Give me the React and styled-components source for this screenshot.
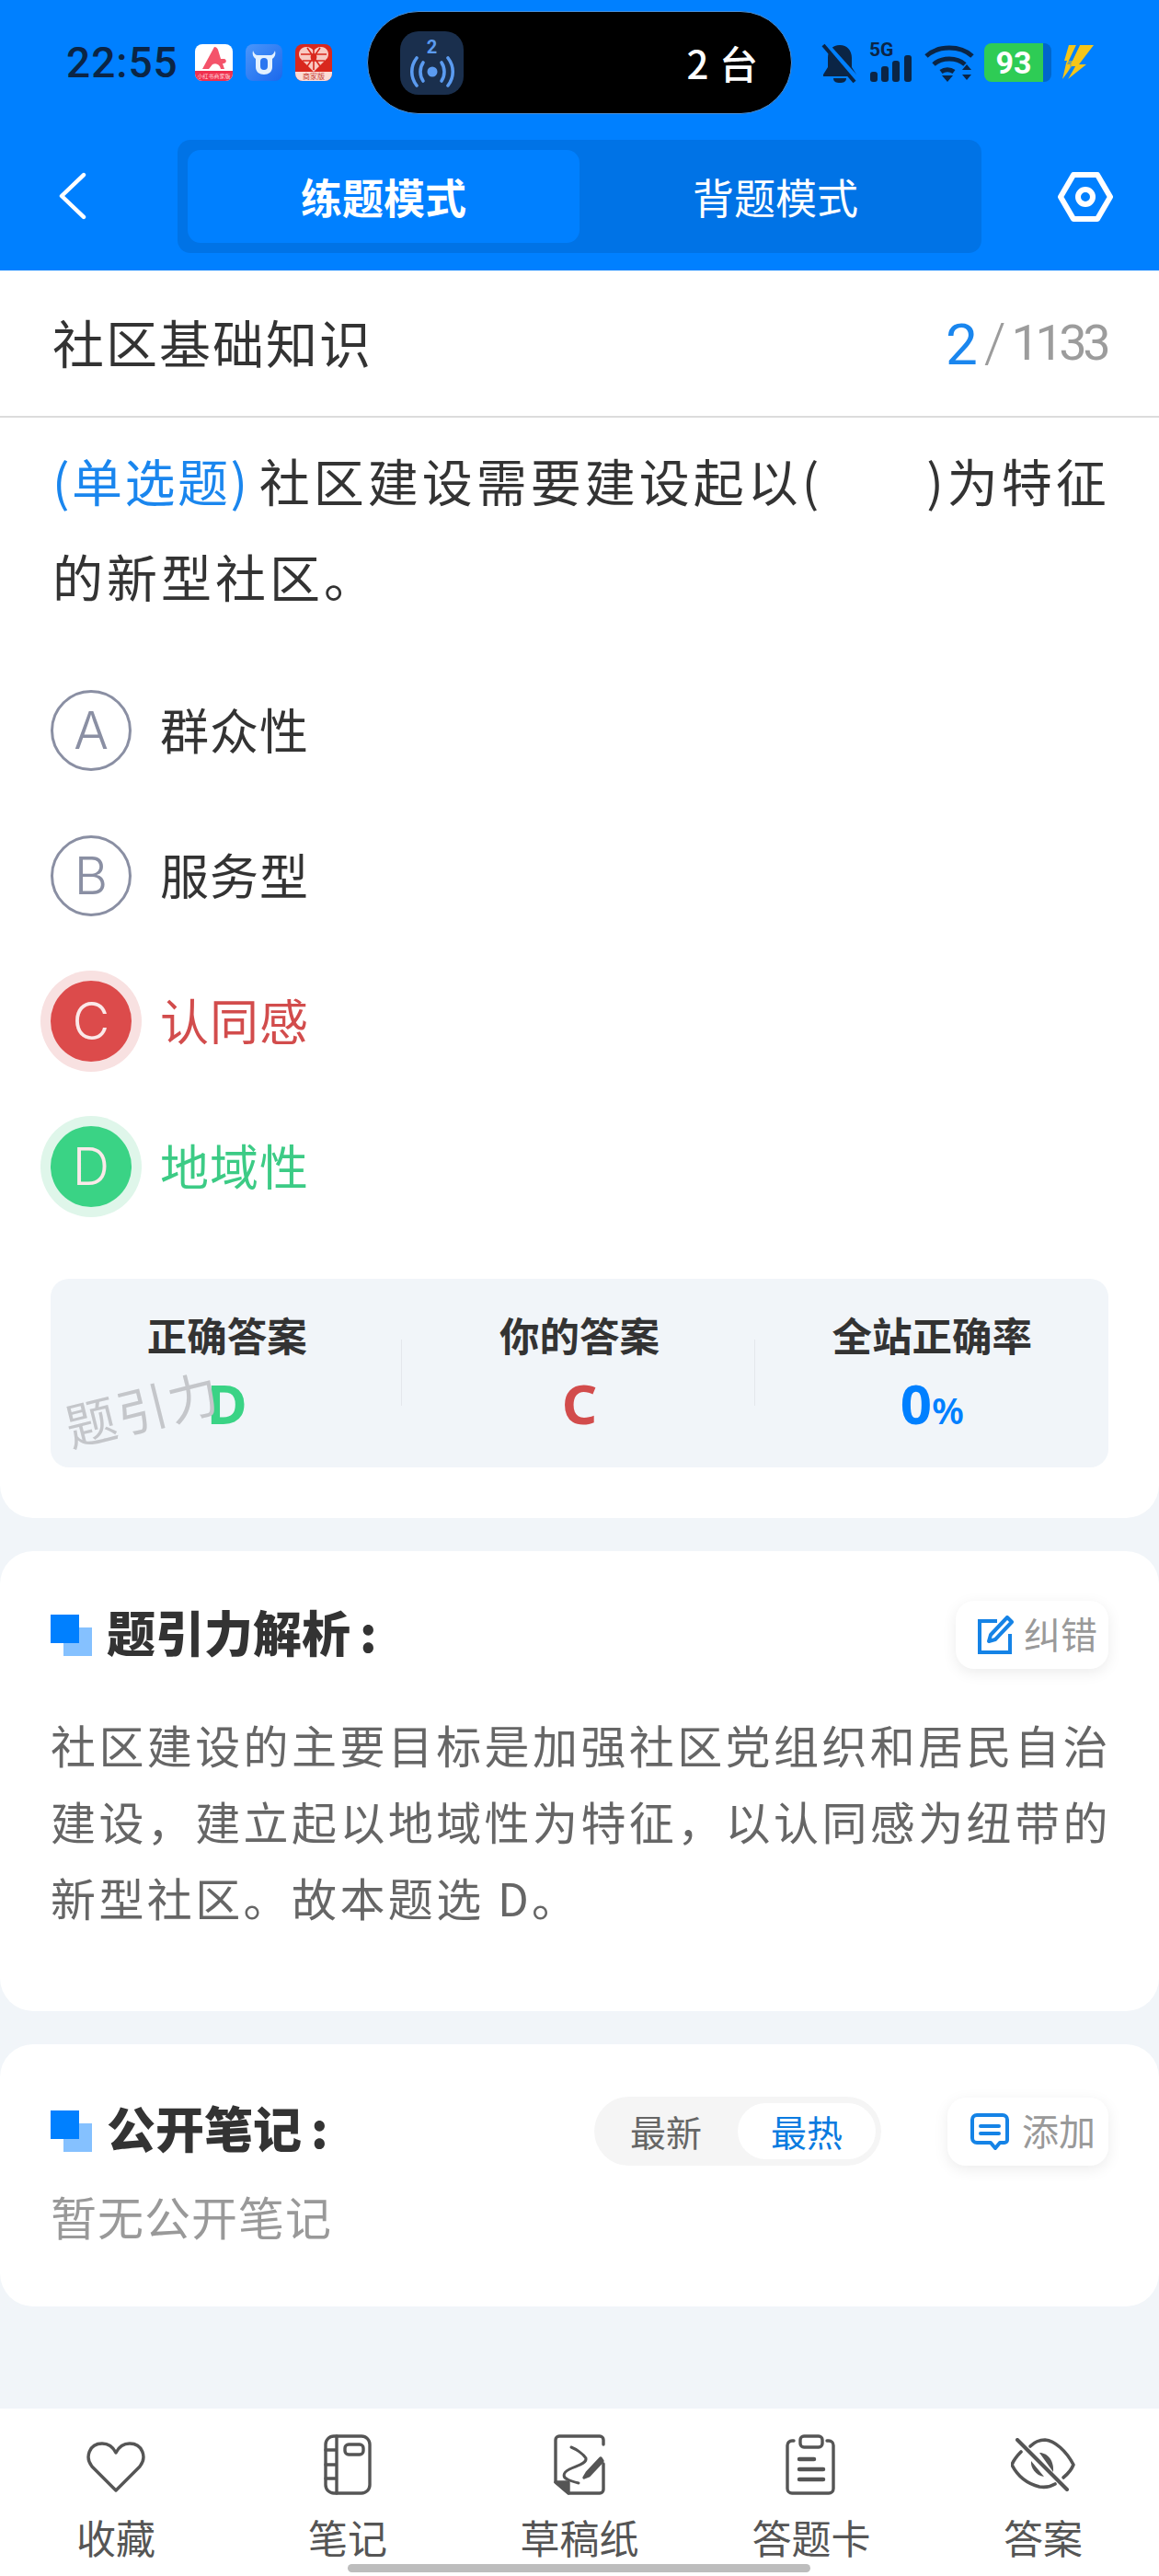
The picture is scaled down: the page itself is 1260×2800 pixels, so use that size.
import React from "react";
import styled, { createGlobalStyle } from "styled-components";

const GlobalStyle = createGlobalStyle`
    html, body {
        margin: 0;
        padding: 0;
        background: #f1f5f9;
    }
    * {
        box-sizing: border-box;
    }
    body {
        font-family: "Noto Sans CJK SC", "Noto Sans", sans-serif;
    }
`;

const Page = styled.div`
    width: 1260px;
    height: 2800px;
    display: flex;
    flex-direction: column;
    overflow: hidden;
    background: #f1f5f9;
    position: relative;
`;

const Header = styled.header`
    height: 294px;
    flex: none;
    background: #0080ff;
    display: flex;
    flex-direction: column;
`;

const StatusBar = styled.div`
    height: 152px;
    flex: none;
    display: flex;
    align-items: flex-start;
    padding: 12px 0 0 72px;
`;

const Clock = styled.div`
    width: 128px;
    margin-top: 33px;
    font-family: Roboto, sans-serif;
    font-size: 46px;
    line-height: 46px;
    font-weight: 500;
    letter-spacing: 1px;
    color: #0b2545;
`;

const AppIcons = styled.div`
    display: flex;
    gap: 14px;
    margin: 36px 0 0 12px;
`;

const Island = styled.div`
    width: 462px;
    height: 112px;
    margin-left: 38px;
    border-radius: 56px;
    background: #000;
    border: 1px solid #4a8fd6;
    display: flex;
    align-items: center;
    justify-content: space-between;
    padding: 0 35px 0 35px;
`;

const IslandIcon = styled.div`
    width: 69px;
    height: 69px;
    border-radius: 20px;
    background: #1a2f4d;
    display: flex;
    flex-direction: column;
    align-items: center;
    justify-content: center;
    color: #5b9bf0;
    font-family: Roboto, sans-serif;
    font-size: 20px;
    line-height: 20px;
    font-weight: 700;
`;

const IslandText = styled.div`
    color: #fff;
    font-size: 42px;
    line-height: 44px;
    font-weight: 500;
    letter-spacing: 1px;
`;

const StatusIcons = styled.div`
    display: flex;
    align-items: flex-start;
    margin: 35px 0 0 32px;
`;

const FiveG = styled.div`
    position: relative;
    width: 48px;
    height: 42px;
    margin-left: 12px;
`;

const FiveGLabel = styled.span`
    position: absolute;
    left: 0;
    top: -4px;
    font-family: Roboto, sans-serif;
    font-size: 21px;
    line-height: 22px;
    font-weight: 700;
    color: #0b2545;
`;

const WifiSvg = styled.svg`
    margin-left: 12px;
`;

const BoltSvg = styled.svg`
    margin: 1px 0 0 11px;
`;

const Battery = styled.div`
    width: 64px;
    height: 42px;
    margin-left: 11px;
    border-radius: 8px 0 0 8px;
    background: #2ecc55;
    color: #fff;
    font-family: Roboto, sans-serif;
    font-size: 34px;
    line-height: 42px;
    font-weight: 700;
    text-align: center;
`;

const BatteryTail = styled.div`
    width: 9px;
    height: 42px;
    border-radius: 0 8px 8px 0;
    background: #0066cc;
`;

const NavBar = styled.div`
    flex: none;
    height: 123px;
    display: flex;
    align-items: center;
    padding: 0 50px 0 64px;
`;

const BackSvg = styled.svg`
    margin-bottom: 2px;
`;

const Toggle = styled.div`
    width: 875px;
    height: 123px;
    margin-left: 99px;
    padding: 11px;
    border-radius: 14px;
    background: #0073e6;
    display: flex;
`;

const ToggleItem = styled.div`
    flex: 1;
    border-radius: 14px;
    background: ${(p) => (p.$active ? "#0080ff" : "transparent")};
    color: #fff;
    font-size: 45px;
    font-weight: ${(p) => (p.$active ? 700 : 400)};
    display: flex;
    align-items: center;
    justify-content: center;
`;

const SettingsWrap = styled.div`
    margin-left: 83px;
    display: flex;
`;

const Card = styled.section`
    flex: none;
    background: #fff;
    border-radius: ${(p) => (p.$top ? "0 0 36px 36px" : "36px")};
    margin-bottom: 36px;
    height: ${(p) => p.$height}px;
    padding-top: ${(p) => p.$padTop || 0}px;
`;

const TitleRow = styled.div`
    height: 160px;
    margin-bottom: 15px;
    padding: 0 55px 0 57px;
    border-bottom: 2px solid #dcdcdc;
    display: flex;
    align-items: center;
    justify-content: space-between;
`;

const SubjectTitle = styled.div`
    font-size: 56px;
    letter-spacing: 2px;
    color: #333;
    margin-bottom: 6px;
`;

const Counter = styled.div`
    display: flex;
    align-items: center;
    font-family: Roboto, sans-serif;
    font-weight: 300;
    color: #9c9c9c;
`;

const CounterNow = styled.span`
    color: #1a86ee;
    font-size: 62px;
    font-weight: 400;
    line-height: 70px;
    margin-top: 4px;
`;

const CounterSlash = styled.span`
    font-size: 60px;
    line-height: 70px;
    margin: 0 6px 0 7px;
`;

const CounterTotal = styled.span`
    font-size: 54px;
    line-height: 70px;
    font-weight: 400;
    letter-spacing: -4.5px;
    margin-right: 2px;
`;

const Question = styled.div`
    padding: 0 0 0 57px;
    font-size: 55px;
    line-height: 104px;
    letter-spacing: 4px;
    color: #333;
    white-space: nowrap;
`;

const QuestionType = styled.span`
    color: #1a86ee;
    letter-spacing: 2.5px;
    margin-right: 10px;
`;

const Blank = styled.span`
    display: inline-block;
    width: 113px;
`;

const Options = styled.div`
    display: flex;
    flex-direction: column;
    gap: 70px;
    margin-top: 73px;
    padding-left: 55px;
`;

const Option = styled.div`
    display: flex;
    align-items: center;
    gap: 31px;
    height: 88px;
    font-size: 53px;
    letter-spacing: 1px;
    color: ${(p) => p.$color || "#333"};
`;

const OptionText = styled.span`
    margin-bottom: 4px;
`;

const Badge = styled.div`
    width: 88px;
    height: 88px;
    flex: none;
    border-radius: 50%;
    display: flex;
    align-items: center;
    justify-content: center;
    font-family: Inter, sans-serif;
    font-weight: 300;
    font-size: 56px;
    letter-spacing: 0;
    border: ${(p) => (p.$fill ? "none" : "3px solid #8a8fa3")};
    color: ${(p) => (p.$fill ? "#fbe9e9" : "#8a8fa3")};
    background: ${(p) => p.$fill || "#fff"};
    box-shadow: ${(p) => (p.$ring ? `0 0 0 11px ${p.$ring}` : "none")};
`;

const AnswerBox = styled.div`
    position: relative;
    margin: 78px 55px 55px;
    height: 205px;
    border-radius: 20px;
    background: #f1f5f9;
    display: grid;
    grid-template-columns: repeat(3, 1fr);
`;

const AnswerCell = styled.div`
    display: flex;
    flex-direction: column;
    align-items: center;
    padding-top: 33px;
    position: relative;
    & + &::before {
        content: "";
        position: absolute;
        left: -2px;
        top: 66px;
        height: 72px;
        width: 1px;
        background: #e4e7ec;
    }
`;

const AnswerLabel = styled.div`
    font-size: 43.5px;
    line-height: 56px;
    font-weight: 700;
    color: #333;
`;

const AnswerValue = styled.div`
    margin-top: 13px;
    font-family: "Noto Sans", sans-serif;
    font-size: 60px;
    line-height: 66px;
    font-weight: 700;
    color: ${(p) => p.$color};
`;

const Percent = styled.span`
    font-size: 40px;
    font-weight: 600;
`;

const Watermark = styled.div`
    position: absolute;
    left: 14px;
    top: 109px;
    font-size: 55px;
    font-weight: 400;
    line-height: 60px;
    letter-spacing: 2px;
    color: #c4c6ca;
    transform: rotate(-14deg);
    pointer-events: none;
`;

const SectionHead = styled.div`
    display: flex;
    align-items: center;
    padding: 0 55px;
`;

const Squares = styled.div`
    position: relative;
    width: 45px;
    height: 45px;
    flex: none;
    margin-right: 16px;
    &::before {
        content: "";
        position: absolute;
        right: 0;
        bottom: 0;
        width: 31px;
        height: 31px;
        background: #85c1ff;
    }
    &::after {
        content: "";
        position: absolute;
        left: 0;
        top: 0;
        width: 31px;
        height: 31px;
        background: #0080ff;
    }
`;

const SectionTitle = styled.div`
    flex: 1;
    font-size: 53px;
    line-height: 60px;
    font-weight: 900;
    color: #333;
    margin-bottom: 9px;
`;

const Colon = styled.span`
    margin-left: 10px;
`;

const ActionBtn = styled.div`
    height: 74px;
    width: ${(p) => p.$width}px;
    border-radius: 20px;
    background: #fff;
    box-shadow: 0 4px 16px rgba(0, 0, 0, 0.08);
    display: flex;
    align-items: center;
    padding-left: ${(p) => p.$left}px;
    gap: ${(p) => p.$gap}px;
    font-size: 40px;
    color: #999;
`;

const ActionLabel = styled.span`
    margin-bottom: 4px;
`;

const Analysis = styled.div`
    padding: 40px 0 0 55px;
    font-size: 49px;
    line-height: 83px;
    letter-spacing: 3.4px;
    color: #666;
    white-space: nowrap;
`;

const Sorter = styled.div`
    width: 312px;
    height: 75px;
    margin-right: 72px;
    border-radius: 38px;
    background: #f5f5f5;
    padding: 7px 6px 7px 0;
    display: flex;
    align-items: center;
`;

const SorterItem = styled.div`
    flex: ${(p) => (p.$active ? "0 0 150px" : "1")};
    height: 61px;
    border-radius: 31px;
    background: ${(p) => (p.$active ? "#fff" : "transparent")};
    color: ${(p) => (p.$active ? "#0b7be0" : "#666")};
    font-size: 39px;
    padding-bottom: 2px;
    display: flex;
    align-items: center;
    justify-content: center;
`;

const EmptyNote = styled.div`
    padding: 18px 0 0 55px;
    font-size: 50px;
    line-height: 72px;
    letter-spacing: 1px;
    color: #999;
`;

const Spacer = styled.div`
    flex: 1;
`;

const BottomNav = styled.nav`
    flex: none;
    height: 182px;
    background: #fff;
    display: grid;
    grid-template-columns: repeat(5, 1fr);
`;

const NavItem = styled.div`
    display: flex;
    flex-direction: column;
    align-items: center;
    padding-top: 27px;
    color: #555;
    font-size: 43px;
    line-height: 56px;
`;

const NavIcon = styled.div`
    height: 68px;
    margin-bottom: 16px;
    display: flex;
    align-items: center;
    justify-content: center;
`;

const HomeBar = styled.div`
    position: absolute;
    left: 378px;
    bottom: 4px;
    width: 503px;
    height: 9px;
    border-radius: 5px;
    background: #bdbdbd;
`;

const stroke = { fill: "none", stroke: "#555", strokeWidth: 3.4, strokeLinecap: "round", strokeLinejoin: "round" };

const RedBookIcon = () => (
    <svg width="41" height="40" viewBox="0 0 41 40">
        <rect width="41" height="40" rx="8" fill="#fff" />
        <path d="M0 29h41v3a8 8 0 0 1-8 8H8a8 8 0 0 1-8-8z" fill="#f0304e" />
        <path d="M21 3c2 0 3 1 4 3l3 10 4 0c3 1 2 5-1 5l-1 0 2 6h-4c-1-5-5-7-9-5l-4 5H8z" fill="#f4536a" />
        <text x="20.5" y="37" textAnchor="middle" fontSize="6" fill="#ffd9de" fontFamily="Noto Sans CJK SC, sans-serif">小红书商家版</text>
    </svg>
);

const CowIcon = () => (
    <svg width="40" height="40" viewBox="0 0 40 40">
        <defs>
            <linearGradient id="cowBg" x1="0" y1="0" x2="1" y2="1">
                <stop offset="0" stopColor="#4a96fa" />
                <stop offset="1" stopColor="#1b68ec" />
            </linearGradient>
        </defs>
        <rect width="40" height="40" rx="8" fill="url(#cowBg)" />
        <path d="M8 7c1 3 3 5 5 5h14c2 0 4-2 5-5 1 4 0 7-3 9v9c0 5-4 8-9 8s-9-3-9-8v-9c-3-2-4-5-3-9z" fill="#e3f1ff" />
        <rect x="16" y="15" width="8" height="13" rx="4" fill="#2a76f0" />
    </svg>
);

const PddIcon = () => (
    <svg width="40" height="40" viewBox="0 0 40 40">
        <rect width="40" height="40" rx="8" fill="#d9281e" />
        <path d="M20 30 L5 15C2 9 6 3 12 3c4 0 6 2 8 4 2-2 4-4 8-4 6 0 10 6 7 12z" fill="#f8c9c2" />
        <path d="M20 6v22M6 11l28 0M8 18h24M13 4l14 20M27 4L13 24" stroke="#d9281e" strokeWidth="1.6" fill="none" />
        <circle cx="20" cy="14" r="3.4" fill="#d9281e" />
        <path d="M0 30h40v2a8 8 0 0 1-8 8H8a8 8 0 0 1-8-8z" fill="#fcdcd6" />
        <text x="20" y="38" textAnchor="middle" fontSize="8" fill="#c23a30" fontFamily="Noto Sans CJK SC, sans-serif">商家版</text>
    </svg>
);

const BroadcastIcon = () => (
    <svg width="50" height="34" viewBox="0 0 50 34" fill="none" stroke="#5b9bf0" strokeWidth="3.6" strokeLinecap="round">
        <circle cx="25" cy="17" r="5.5" fill="#5b9bf0" stroke="none" />
        <path d="M15 7c-4 6-4 14 0 20M35 7c4 6 4 14 0 20" />
        <path d="M8 2C1 11 1 23 8 32M42 2c7 9 7 21 0 30" />
    </svg>
);

const BellOff = () => (
    <svg width="40" height="44" viewBox="0 0 40 44">
        <path d="M20 2c8 0 13 6 13 14v10l5 8v2H2v-2l5-8V16C7 8 12 2 20 2z" fill="#0b2545" />
        <path d="M13 38h14c0 4-3 5-7 5s-7-1-7-5z" fill="#0b2545" />
        <path d="M3 0 L39 40" stroke="#0080ff" strokeWidth="7" />
        <path d="M2 2 L36 42" stroke="#0b2545" strokeWidth="4" />
    </svg>
);

const SignalBars = () => (
    <svg width="48" height="42" viewBox="0 0 48 42" fill="#0b2545">
        <rect x="1" y="31" width="8" height="11" rx="3" />
        <rect x="13" y="25" width="8" height="17" rx="3" />
        <rect x="25" y="19" width="8" height="23" rx="3" />
        <rect x="38" y="13" width="8" height="29" rx="3" />
    </svg>
);

const Wifi = () => (
    <WifiSvg width="54" height="44" viewBox="0 0 54 44">
        <path d="M2 14C15 2 39 2 52 14M10 23c9-8 25-8 34 0M18 31c4-3 10-3 14 0" fill="none" stroke="#0b2545" strokeWidth="5" />
        <path d="M19 35h12l-6 7zM41 29l5-6 5 6zM41 34h10l-5 6z" fill="#0b2545" />
    </WifiSvg>
);

const Bolt = () => (
    <BoltSvg width="36" height="40" viewBox="0 0 36 40">
        <path d="M8 1h8L8 18h8L1 38l4-17 1-3H3z" fill="#f5c518" />
        <path d="M20 1h15L19 22h8L7 38l8-14H9z" fill="#f5c518" />
        <path d="M7 38l8-14H9l11-23h-4L6 22h5L3 38z" fill="#0080ff" fillOpacity=".5" />
    </BoltSvg>
);

const BackIcon = () => (
    <BackSvg width="30" height="52" viewBox="0 0 30 52" fill="none" stroke="#fff" strokeWidth="4.5" strokeLinecap="round" strokeLinejoin="round">
        <path d="M27 3 L3 26 L27 49" />
    </BackSvg>
);

const SettingsIcon = () => (
    <svg width="60" height="54" viewBox="0 0 60 54" fill="none" stroke="#fff" strokeWidth="6" strokeLinejoin="round">
        <path d="M17 3h26l14 24-14 24H17L3 27z" />
        <circle cx="30" cy="27" r="8" />
    </svg>
);

const EditIcon = () => (
    <svg width="40" height="42" viewBox="0 0 40 42" fill="none" stroke="#1583e6" strokeWidth="4">
        <path d="M22 6H3v34h33V20" />
        <path d="M33 2l5 5-18 19-7 2 2-7z" strokeLinejoin="round" />
    </svg>
);

const CommentIcon = () => (
    <svg width="42" height="40" viewBox="0 0 42 40" fill="none" stroke="#1583e6" strokeWidth="4" strokeLinejoin="round">
        <path d="M7 2h28a5 5 0 0 1 5 5v22a3 3 0 0 1-3 3h-5l-5 6-5-6H7a5 5 0 0 1-5-5V7a5 5 0 0 1 5-5z" />
        <path d="M11 14h20M11 22h20" strokeLinecap="round" />
    </svg>
);

const HeartIcon = () => (
    <svg width="66" height="64" viewBox="0 0 66 64" {...stroke}>
        <path d="M33 60 L7 34C-1 24 4 9 18 9C25 9 30 13 33 19C36 13 41 9 48 9C62 9 67 24 59 34z" />
    </svg>
);

const NotebookIcon = () => (
    <svg width="52" height="66" viewBox="0 0 52 66" {...stroke}>
        <rect x="2" y="2" width="48" height="62" rx="9" />
        <path d="M14 2v62M2 17h12M2 33h12M2 48h12" />
        <rect x="23" y="11" width="20" height="11" rx="4" />
    </svg>
);

const DraftIcon = () => (
    <svg width="56" height="66" viewBox="0 0 56 66" {...stroke}>
        <path d="M54 11V6a4 4 0 0 0-4-4H6a4 4 0 0 0-4 4v46l14 12h34a4 4 0 0 0 4-4V32" />
        <path d="M2 52h14v12z" fill="#555" />
        <path d="M19 14c5 2 13 7 16 12 1 6-10 8-18 12-8 4-7 9-2 11 4 2 8 3 12 4" strokeWidth="3" />
        <path d="M51 26 L36 42l-3 5 5-2L53 29z" strokeWidth="3.4" fill="#555" />
    </svg>
);

const ClipboardIcon = () => (
    <svg width="56" height="66" viewBox="0 0 56 66" {...stroke}>
        <path d="M9 7H7a5 5 0 0 0-5 5v47a5 5 0 0 0 5 5h40a5 5 0 0 0 5-5V12a5 5 0 0 0-5-5h-2" />
        <rect x="16" y="2" width="24" height="12" rx="4" />
        <path d="M15 27h16M15 38h26M15 49h26" strokeWidth="4.5" />
    </svg>
);

const EyeOffIcon = () => (
    <svg width="70" height="58" viewBox="0 0 70 58" {...stroke}>
        <path d="M21 9C26 4 32 2 37 2C48 3 60 14 68 29C66 34 62 39 57 43" strokeWidth="3.6" />
        <path d="M11 15C7 19 3 24 1 29C6 39 15 49 31 53C37 54 43 53 48 50" strokeWidth="3.6" />
        <path d="M31 16C38 16 47 22 46 37z" fill="#555" stroke="none" />
        <path d="M22 25C21 32 27 41 36 42z" fill="#555" stroke="none" />
        <path d="M7 2 L61 56" strokeWidth="4" />
    </svg>
);

const OPTIONS = [
    { key: "A", text: "群众性" },
    { key: "B", text: "服务型" },
    { key: "C", text: "认同感", color: "#d24c4c", fill: "#dc4b4b", ring: "#f8e1e1" },
    { key: "D", text: "地域性", color: "#3ccb85", fill: "#3ad385", ring: "#dff6ea" },
];

const NAV_ITEMS = [
    { label: "收藏", icon: <HeartIcon /> },
    { label: "笔记", icon: <NotebookIcon /> },
    { label: "草稿纸", icon: <DraftIcon /> },
    { label: "答题卡", icon: <ClipboardIcon /> },
    { label: "答案", icon: <EyeOffIcon /> },
];

const App = () => {
    return (
        <Page>
            <GlobalStyle />

            <Header>
                <StatusBar>
                    <Clock>22:55</Clock>
                    <AppIcons>
                        <RedBookIcon />
                        <CowIcon />
                        <PddIcon />
                    </AppIcons>
                    <Island>
                        <IslandIcon>
                            2
                            <BroadcastIcon />
                        </IslandIcon>
                        <IslandText>2 台</IslandText>
                    </Island>
                    <StatusIcons>
                        <BellOff />
                        <FiveG>
                            <FiveGLabel>5G</FiveGLabel>
                            <SignalBars />
                        </FiveG>
                        <Wifi />
                        <Battery>93</Battery>
                        <BatteryTail />
                        <Bolt />
                    </StatusIcons>
                </StatusBar>
                <NavBar>
                    <BackIcon />
                    <Toggle>
                        <ToggleItem $active>练题模式</ToggleItem>
                        <ToggleItem>背题模式</ToggleItem>
                    </Toggle>
                    <SettingsWrap>
                        <SettingsIcon />
                    </SettingsWrap>
                </NavBar>
            </Header>

            <Card $top $height={1356}>
                <TitleRow>
                    <SubjectTitle>社区基础知识</SubjectTitle>
                    <Counter>
                        <CounterNow>2</CounterNow>
                        <CounterSlash>/</CounterSlash>
                        <CounterTotal>1133</CounterTotal>
                    </Counter>
                </TitleRow>
                <Question>
                    <QuestionType>(单选题)</QuestionType>
                    社区建设需要建设起以(<Blank />)为特征
                    <br />
                    的新型社区。
                </Question>
                <Options>
                    {OPTIONS.map((o) => (
                        <Option key={o.key} $color={o.color}>
                            <Badge $fill={o.fill} $ring={o.ring}>{o.key}</Badge>
                            <OptionText>{o.text}</OptionText>
                        </Option>
                    ))}
                </Options>
                <AnswerBox>
                    <AnswerCell>
                        <AnswerLabel>正确答案</AnswerLabel>
                        <AnswerValue $color="#3ad385">D</AnswerValue>
                    </AnswerCell>
                    <AnswerCell>
                        <AnswerLabel>你的答案</AnswerLabel>
                        <AnswerValue $color="#d24c4c">C</AnswerValue>
                    </AnswerCell>
                    <AnswerCell>
                        <AnswerLabel>全站正确率</AnswerLabel>
                        <AnswerValue $color="#0080ff">0<Percent>%</Percent></AnswerValue>
                    </AnswerCell>
                    <Watermark>题引力</Watermark>
                </AnswerBox>
            </Card>

            <Card $height={500} $padTop={54}>
                <SectionHead>
                    <Squares />
                    <SectionTitle>题引力解析<Colon>:</Colon></SectionTitle>
                    <ActionBtn $width={166} $left={23} $gap={11}>
                        <EditIcon />
                        <ActionLabel>纠错</ActionLabel>
                    </ActionBtn>
                </SectionHead>
                <Analysis>
                    社区建设的主要目标是加强社区党组织和居民自治
                    <br />
                    {"建设\uFF0C建立起以地域性为特征\uFF0C以认同感为纽带的"}
                    <br />
                    新型社区。故本题选 D。
                </Analysis>
            </Card>

            <Card $height={285} $padTop={57}>
                <SectionHead>
                    <Squares />
                    <SectionTitle>公开笔记<Colon>:</Colon></SectionTitle>
                    <Sorter>
                        <SorterItem>最新</SorterItem>
                        <SorterItem $active>最热</SorterItem>
                    </Sorter>
                    <ActionBtn $width={175} $left={25} $gap={14}>
                        <CommentIcon />
                        <ActionLabel>添加</ActionLabel>
                    </ActionBtn>
                </SectionHead>
                <EmptyNote>暂无公开笔记</EmptyNote>
            </Card>

            <Spacer />

            <BottomNav>
                {NAV_ITEMS.map((item) => (
                    <NavItem key={item.label}>
                        <NavIcon>{item.icon}</NavIcon>
                        {item.label}
                    </NavItem>
                ))}
            </BottomNav>
            <HomeBar />
        </Page>
    );
};

export default App;
